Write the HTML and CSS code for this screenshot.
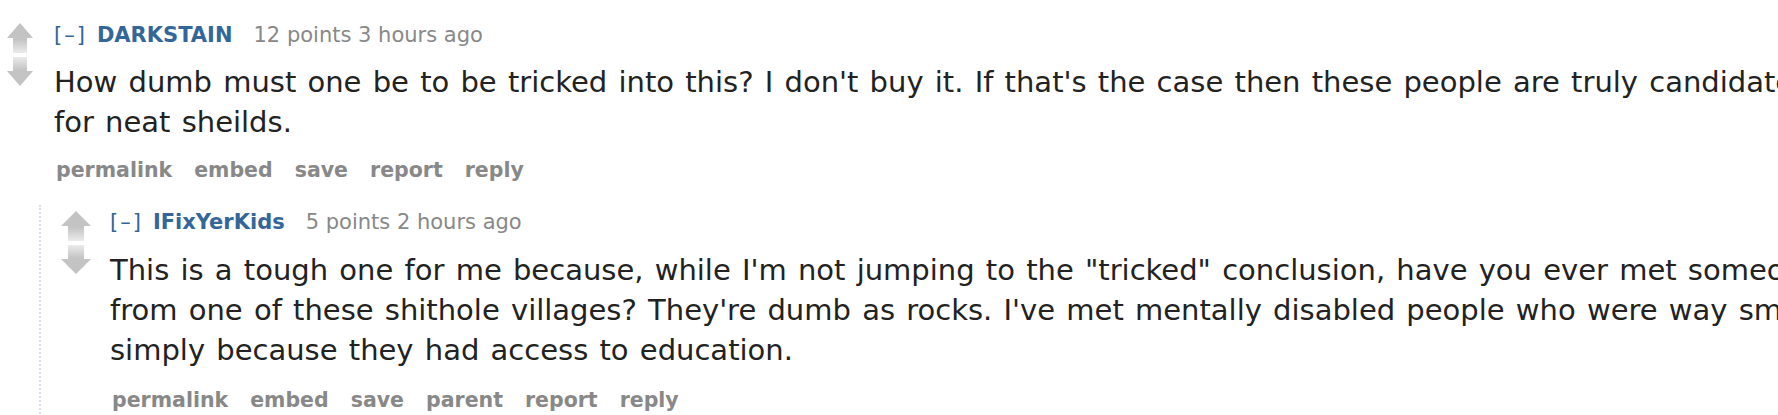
FILE: index.html
```html
<!DOCTYPE html>
<html>
<head>
<meta charset="utf-8">
<link rel="stylesheet" href="styles.css">
</head>
<body>
<svg class="defs" width="0" height="0" aria-hidden="true">
  <defs>
    <linearGradient id="gUp" x1="0" y1="0" x2="0" y2="1">
      <stop offset="0" stop-color="#c2c2c2"/>
      <stop offset="0.55" stop-color="#c4c4c4"/>
      <stop offset="1" stop-color="#ebebeb"/>
    </linearGradient>
    <linearGradient id="gDown" x1="0" y1="1" x2="0" y2="0">
      <stop offset="0" stop-color="#c2c2c2"/>
      <stop offset="0.55" stop-color="#c4c4c4"/>
      <stop offset="1" stop-color="#ebebeb"/>
    </linearGradient>
  </defs>
</svg>

<div class="comment">
  <div class="row">
    <div class="midcol">
      <svg class="arrow" viewBox="0 0 26 30" preserveAspectRatio="none"><path d="M13 0 L26 15 L20 15 L20 30 L6 30 L6 15 L0 15 Z" fill="url(#gUp)"/></svg>
      <svg class="arrow" viewBox="0 0 26 30" preserveAspectRatio="none"><path d="M6 0 L20 0 L20 14 L26 14 L13 29 L0 14 L6 14 Z" fill="url(#gDown)"/></svg>
    </div>
    <div class="entry">
      <p class="tagline"><span class="expand">[–]</span><span class="author">DARKSTAIN</span><span class="meta">12 points 3 hours ago</span></p>
      <div class="md">
        <p>How dumb must one be to be tricked into this? I don't buy it. If that's the case then these people are truly candidates<br>for neat sheilds.</p>
      </div>
      <ul class="buttons">
        <li>permalink</li><li>embed</li><li>save</li><li>report</li><li>reply</li>
      </ul>
    </div>
  </div>

  <div class="child">
    <div class="comment">
      <div class="row">
        <div class="midcol midcol-child">
          <svg class="arrow" viewBox="0 0 26 30" preserveAspectRatio="none"><path d="M13 0 L26 15 L20 15 L20 30 L6 30 L6 15 L0 15 Z" fill="url(#gUp)"/></svg>
          <svg class="arrow" viewBox="0 0 26 30" preserveAspectRatio="none"><path d="M6 0 L20 0 L20 14 L26 14 L13 29 L0 14 L6 14 Z" fill="url(#gDown)"/></svg>
        </div>
        <div class="entry">
          <p class="tagline"><span class="expand">[–]</span><span class="author">IFixYerKids</span><span class="meta">5 points 2 hours ago</span></p>
          <div class="md md-child">
            <p>This is a tough one for me because, while I'm not jumping to the "tricked" conclusion, have you ever met someone<br>from one of these shithole villages? They're dumb as rocks. I've met mentally disabled people who were way smarter<br>simply because they had access to education.</p>
          </div>
          <ul class="buttons buttons-child">
            <li>permalink</li><li>embed</li><li>save</li><li>parent</li><li>report</li><li>reply</li>
          </ul>
        </div>
      </div>
    </div>
  </div>
</div>
</body>
</html>
```

FILE: styles.css
```css
html, body {
  margin: 0;
  padding: 0;
  background: #ffffff;
}

body {
  padding-left: 7px;
  font-family: "DejaVu Sans", Verdana, sans-serif;
  overflow: hidden;
  height: 415px;
}

.defs {
  position: absolute;
  width: 0;
  height: 0;
}

.row {
  display: flex;
  align-items: flex-start;
}

.midcol {
  width: 26px;
  flex: none;
  margin-right: 21px;
  padding-top: 23px;
  display: flex;
  flex-direction: column;
  gap: 4px;
}

.midcol-child {
  width: 30px;
  margin-right: 19px;
  padding-top: 6px;
}

.arrow {
  display: block;
  width: 100%;
  height: 30px;
}

.entry {
  flex: 1;
  min-width: 0;
}

.tagline {
  margin: 0;
  padding-top: 22px;
  font-size: 21px;
  line-height: 26px;
  color: #888888;
  white-space: nowrap;
  display: flex;
  align-items: baseline;
}

.child .tagline {
  padding-top: 4px;
}

.expand {
  color: #369;
  letter-spacing: 2px;
  margin-right: 10px;
}

.author {
  color: #369;
  font-weight: bold;
  margin-right: 21px;
}

.md {
  margin-top: 14px;
  color: #222222;
  font-size: 29px;
  line-height: 40px;
  word-spacing: 2px;
}

.md-child {
  margin-top: 15px;
}

.md p {
  margin: 0;
  white-space: nowrap;
}

.buttons {
  list-style: none;
  margin: 15px 0 0 0;
  padding: 0 0 0 2px;
  display: flex;
  gap: 22px;
  font-size: 20.5px;
  line-height: 26px;
  font-weight: bold;
  color: #888888;
}

.buttons-child {
  margin-top: 17px;
}

.child {
  margin-left: 32px;
  margin-top: 22px;
  border-left: 2px dotted #dcdcf4;
  padding-left: 20px;
  padding-bottom: 20px;
}
```
